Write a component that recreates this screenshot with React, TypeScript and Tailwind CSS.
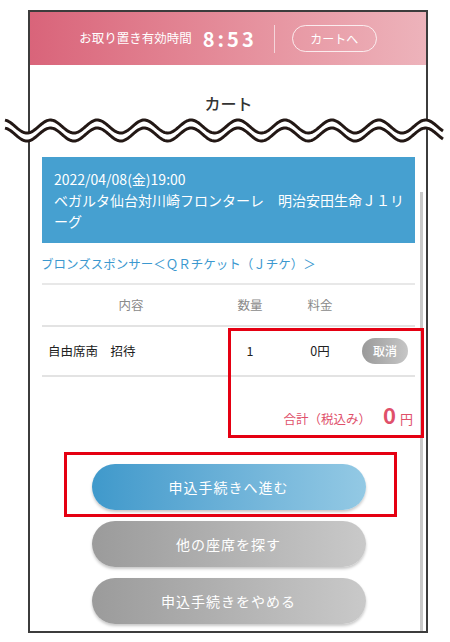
function wavePath(center: number) {
  let d = '';
  for (let x = 5; x <= 443; x += 1) {
    const y = center - 6.5 * Math.cos((2 * Math.PI * (x - 3.5)) / 46.9);
    d += (x === 5 ? 'M' : 'L') + x + ' ' + y.toFixed(2) + ' ';
  }
  return d;
}

function WaveCut() {
  return (
    <svg
      className="absolute left-0 top-[100px]"
      width="450"
      height="50"
      viewBox="0 100 450 50"
    >
      <path d={wavePath(130.5)} fill="none" stroke="#ffffff" strokeWidth="7" />
      <path d={wavePath(126.5)} fill="none" stroke="#231815" strokeWidth="3" />
      <path d={wavePath(134.5)} fill="none" stroke="#231815" strokeWidth="3" />
    </svg>
  );
}

export default function App() {
  return (
    <div className="relative w-[450px] h-[642px] overflow-hidden bg-white font-['Noto_Sans_CJK_JP','Liberation_Sans',sans-serif]">
      <div className="ml-[28px] mt-[10px] w-[400px] border-2 border-[#3c3c3c]">
        {/* Header */}
        <div className="flex h-[53px] items-center justify-center bg-linear-to-r from-[#d9647a] to-[#edb3bb] text-white">
          <span className="text-[12.5px] leading-none">お取り置き有効時間</span>
          <span className="ml-[11px] text-[20px] font-bold leading-none tracking-[3px]">8:53</span>
          <span className="ml-[17px] h-[28px] w-px bg-white/60" />
          <button className="ml-[17px] flex h-[27px] w-[85px] items-center justify-center rounded-full border-[1.5px] border-white/80 text-[12px]">
            カートへ
          </button>
        </div>

        <div className="flex">
          {/* Main column */}
          <div className="w-[385px] pl-[12px] pb-[7px]">
            <div className="pt-[26px] pb-[42px] text-center text-[16px] font-medium leading-[24px] text-[#333]">
              カート
            </div>

            <div className="bg-[#46a0d0] pl-[12px] pr-[10px] pt-[12px] pb-[11px] text-[14px] leading-[21px] text-white">
              <div>2022/04/08(金)19:00</div>
              <div>
                ベガルタ仙台対川崎フロンターレ　明治安田生命Ｊ１リ
                <br />
                ーグ
              </div>
            </div>

            <div className="-ml-px mt-[11px] text-[12.5px] leading-[20px] text-[#3b98cf]">
              ブロンズスポンサー＜ＱＲチケット（Ｊチケ）＞
            </div>

            <div className="mt-[9px] h-[2px] bg-[#e8e8e8]" />

            <div className="grid h-[40px] grid-cols-[178px_60px_80px_55px] items-center text-[12.5px] text-[#8a8a8a]">
              <span className="text-center">内容</span>
              <span className="text-center">数量</span>
              <span className="text-center">料金</span>
              <span />
            </div>

            <div className="h-[2px] bg-[#e3e3e3]" />

            <div className="grid h-[48px] grid-cols-[178px_60px_80px_55px] items-center text-[12.5px] text-[#222]">
              <span className="pl-[6px]">自由席南　招待</span>
              <span className="text-center">1</span>
              <span className="text-center">0円</span>
              <span className="pl-[2px]">
                <button className="flex h-[26px] w-[46px] items-center justify-center rounded-full bg-linear-to-r from-[#9a9a9a] to-[#c6c6c6] text-[12px] font-medium text-white">
                  取消
                </button>
              </span>
            </div>

            <div className="h-[2px] bg-[#e3e3e3]" />

            <div className="flex items-baseline justify-end pt-[23px] pr-[2px] leading-[28px] text-[#e0506a]">
              <span className="text-[12.5px]">合計（税込み）</span>
              <span className="ml-[12px] text-[22px] font-bold">0</span>
              <span className="ml-[4px] text-[13px]">円</span>
            </div>

            <div className="mt-[31px] flex flex-col items-center gap-[11px]">
              <button className="h-[46px] w-[274px] rounded-full bg-linear-to-r from-[#3f99cb] to-[#93c9e4] text-[14px] tracking-[1px] text-white shadow-[0_2px_3px_rgba(0,0,0,0.22)]">
                申込手続きへ進む
              </button>
              <button className="h-[46px] w-[274px] rounded-full bg-linear-to-r from-[#9b9b9b] to-[#c9c9c9] text-[14px] tracking-[1px] text-white shadow-[0_2px_3px_rgba(0,0,0,0.22)]">
                他の座席を探す
              </button>
              <button className="h-[46px] w-[274px] rounded-full bg-linear-to-r from-[#9b9b9b] to-[#c9c9c9] text-[14px] tracking-[1px] text-white shadow-[0_2px_3px_rgba(0,0,0,0.22)]">
                申込手続きをやめる
              </button>
            </div>
          </div>

          {/* Scrollbar */}
          <div className="ml-[5px] flex w-[3px] flex-col pt-[127px]">
            <div className="flex-1 bg-[#c9c9c9]" />
          </div>
        </div>
      </div>

      <WaveCut />

      {/* Highlight boxes */}
      <div className="absolute left-[228px] top-[328px] h-[110px] w-[196px] border-[3px] border-[#e50012]" />
      <div className="absolute left-[64px] top-[452px] h-[65px] w-[333px] border-[3px] border-[#e50012]" />
    </div>
  );
}
